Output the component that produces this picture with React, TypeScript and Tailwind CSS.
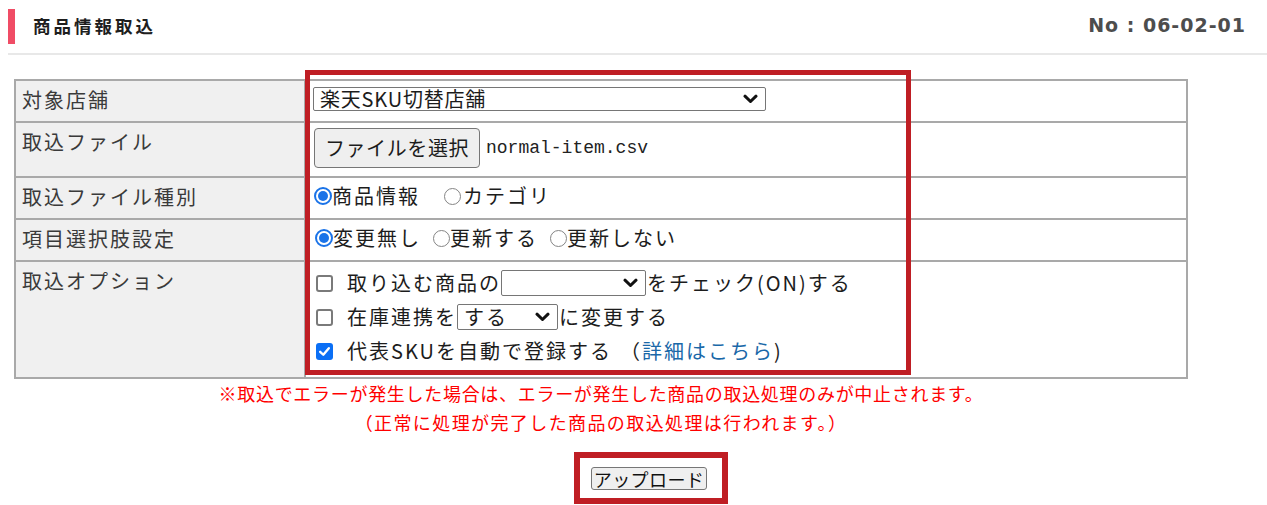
import React from "react";

function Radio({ checked }: { checked?: boolean }) {
  return checked ? (
    <span className="inline-flex w-[18px] h-[18px] shrink-0 items-center justify-center rounded-full border-[2px] border-[#1a73e8] bg-white">
      <span className="block w-[10px] h-[10px] rounded-full bg-[#1a73e8]" />
    </span>
  ) : (
    <span className="inline-block w-[17px] h-[17px] shrink-0 rounded-full border-[1.5px] border-[#858585] bg-white" />
  );
}

function Checkbox({ checked }: { checked?: boolean }) {
  return checked ? (
    <span className="inline-flex w-[17px] h-[17px] shrink-0 items-center justify-center rounded-[3px] bg-[#0b6ff5]">
      <svg width="13" height="13" viewBox="0 0 12 12">
        <path d="M2 6.3 L4.9 9 L10 3" fill="none" stroke="white" strokeWidth="2.2" strokeLinecap="round" strokeLinejoin="round" />
      </svg>
    </span>
  ) : (
    <span className="inline-block w-[17px] h-[17px] shrink-0 rounded-[3px] border-[2px] border-[#7a7a7a] bg-white" />
  );
}

function Chevron() {
  return (
    <svg width="15" height="10" viewBox="0 0 15 10" className="shrink-0">
      <path d="M2 2.2 L7.5 7.5 L13 2.2" fill="none" stroke="#111" strokeWidth="3" strokeLinecap="round" strokeLinejoin="round" />
    </svg>
  );
}

function Select({ className, text }: { className: string; text?: string }) {
  return (
    <span className={"inline-flex items-center justify-between shrink-0 border border-[#767676] rounded-[2px] bg-white pl-[6px] pr-[7px] " + className}>
      <span className="leading-none">{text ?? ""}</span>
      <Chevron />
    </span>
  );
}

const labelCls =
  "w-[290px] shrink-0 bg-[#f0f0f0] border-r-2 border-[#a9a9a9] pl-[6px] pt-[5px] leading-[28px] text-[20px] tracking-[2px] text-[#3a3a3a]";

export default function App() {
  return (
    <div className="relative w-[1267px] h-[505px] overflow-hidden bg-white text-[#1c1c1c] font-['Noto_Sans_CJK_JP','Noto_Sans',sans-serif]">
      {/* header */}
      <div className="ml-[8px] h-[55px] border-b-2 border-[#e8e8e8] flex items-center justify-between">
        <div className="flex items-center">
          <span className="block w-[7px] h-[35px] bg-[#f04c65] -mt-[1px]" />
          <span className="ml-[18px] -mt-[1px] text-[17.5px] font-bold tracking-[3px] text-[#1e1e1e]">商品情報取込</span>
        </div>
        <span className="mr-[21px] -mt-[2px] font-['DejaVu_Sans',sans-serif] font-bold text-[19px] tracking-[1px] text-[#4d4d4d]">
          No : 06-02-01
        </span>
      </div>

      {/* table */}
      <div className="ml-[14px] mt-[24px] w-[1174px] border-2 border-[#a9a9a9]">
        {/* row 1 */}
        <div className="flex h-[42px] border-b-2 border-[#a9a9a9]">
          <div className={labelCls}>対象店舗</div>
          <div className="flex-1 pl-[7px] pt-[6px]">
            <Select className="w-[453px] h-[24px] text-[20px] tracking-[0.8px]" text="楽天SKU切替店舗" />
          </div>
        </div>
        {/* row 2 */}
        <div className="flex h-[55px] border-b-2 border-[#a9a9a9]">
          <div className={labelCls}>取込ファイル</div>
          <div className="flex-1 pl-[8px] pt-[5px] flex items-start">
            <span className="inline-flex items-center justify-center w-[166px] h-[40px] border border-[#767676] rounded-[4px] bg-[#efefef] text-[20px] tracking-[0.6px]">
              ファイルを選択
            </span>
            <span className="ml-[6px] h-[40px] flex items-center font-['Liberation_Mono',monospace] text-[18px] text-[#222]">
              normal-item.csv
            </span>
          </div>
        </div>
        {/* row 3 */}
        <div className="flex h-[42px] border-b-2 border-[#a9a9a9]">
          <div className={labelCls}>取込ファイル種別</div>
          <div className="flex-1 pl-[8px] pb-[4px] flex items-center text-[20px] tracking-[2px]">
            <Radio checked />
            <span className="ml-[0px]">商品情報</span>
            <span className="ml-[24px] flex"><Radio /></span>
            <span className="ml-[2px]">カテゴリ</span>
          </div>
        </div>
        {/* row 4 */}
        <div className="flex h-[42px] border-b-2 border-[#a9a9a9]">
          <div className={labelCls}>項目選択肢設定</div>
          <div className="flex-1 pl-[9px] pb-[4px] flex items-center text-[20px] tracking-[2px]">
            <Radio checked />
            <span className="ml-[0px]">変更無し</span>
            <span className="ml-[12px] flex"><Radio /></span>
            <span>更新する</span>
            <span className="ml-[12px] flex"><Radio /></span>
            <span>更新しない</span>
          </div>
        </div>
        {/* row 5 */}
        <div className="flex h-[115px]">
          <div className={labelCls}>取込オプション</div>
          <div className="flex-1 pl-[10px] pt-[4px] flex flex-col text-[20px] tracking-[2px]">
            <div className="h-[34px] flex items-center">
              <Checkbox />
              <span className="ml-[14px]">取り込む商品の</span>
              <Select className="w-[145px] h-[26px]" />
              <span className="ml-[1px]">をチェック(ON)する</span>
            </div>
            <div className="h-[34px] flex items-center">
              <Checkbox />
              <span className="ml-[14px]">在庫連携を</span>
              <Select className="w-[101px] h-[26px]" text="する" />
              <span className="ml-[1px]">に変更する</span>
            </div>
            <div className="h-[34px] flex items-center">
              <Checkbox checked />
              <span className="ml-[14px]">代表SKUを自動で登録する</span>
              <span className="ml-[8px]">（</span>
              <span className="text-[#1a68a8]">詳細はこちら</span>
              <span>)</span>
            </div>
          </div>
        </div>
      </div>

      {/* notice */}
      <div className="ml-[14px] w-[1174px] text-center text-[#ff0000] text-[18px] tracking-[0.7px] leading-[29px]">
        <p>※取込でエラーが発生した場合は、エラーが発生した商品の取込処理のみが中止されます。</p>
        <p className="tracking-[1.4px]">（正常に処理が完了した商品の取込処理は行われます。）</p>
      </div>

      {/* upload */}
      <div className="mt-[30px] ml-[591px] flex">
        <span className="inline-flex items-center justify-center w-[116px] h-[23px] border border-[#767676] rounded-[3px] bg-[#efefef] text-[18px] leading-none tracking-[0.4px] text-[#111]">
          アップロード
        </span>
      </div>

      {/* annotation boxes */}
      <div className="absolute left-[305px] top-[70px] w-[606px] h-[305px] border-[5px] border-[#bf1e24] pointer-events-none" />
      <div className="absolute left-[574px] top-[452px] w-[154px] h-[52px] border-[6px] border-[#bf1e24] pointer-events-none" />
    </div>
  );
}
